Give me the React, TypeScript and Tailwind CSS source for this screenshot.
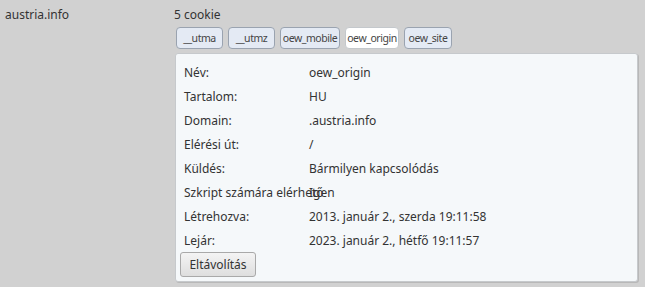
import React from 'react';

const cookies: { name: string; w: string }[] = [
  { name: '__utma', w: 'w-[47px]' },
  { name: '__utmz', w: 'w-[47px]' },
  { name: 'oew_mobile', w: 'w-[60px]' },
  { name: 'oew_origin', w: 'w-[54px]' },
  { name: 'oew_site', w: 'w-[48px]' },
];
const active = 'oew_origin';

const rows: [string, string][] = [
  ['Név:', 'oew_origin'],
  ['Tartalom:', 'HU'],
  ['Domain:', '.austria.info'],
  ['Elérési út:', '/'],
  ['Küldés:', 'Bármilyen kapcsolódás'],
  ['Szkript számára elérhető', 'Igen'],
  ['Létrehozva:', '2013. január 2., szerda 19:11:58'],
  ['Lejár:', '2023. január 2., hétfő 19:11:57'],
];

export default function App() {
  return (
    <div
      className="w-[645px] h-[287px] bg-[#d1d1d1] text-[#333] text-[12px] flex overflow-hidden"
      style={{ fontFamily: '"Segoe UI", "Noto Sans", "Open Sans", sans-serif' }}
    >
      {/* Site column */}
      <div className="w-[169px] pl-[5px] pt-[7px] leading-[16px]">austria.info</div>

      {/* Cookie details */}
      <div className="flex-1 flex flex-col pt-[7px] pr-[7px]">
        <div className="pl-[5px] leading-[16px]">5 cookie</div>
        <div className="flex gap-[5px] mt-[4px] pl-[7px]">
          {cookies.map((c) => (
            <button
              key={c.name}
              className={`${c.w} h-[22px] rounded-[4px] border text-[10.5px] tracking-[-0.45px] leading-none text-[#444] whitespace-nowrap ${
                c.name === active
                  ? 'bg-white border-[#c4c8cc]'
                  : 'bg-[#e4eaf4] border-[#9aa3b0]'
              }`}
            >
              {c.name}
            </button>
          ))}
        </div>
        <div className="mt-[4px] ml-[6px] h-[229px] bg-[#f5f8fa] border border-[#c6c9cc] rounded-[3px] shadow-[1px_1px_0_#b8b8b8] flex flex-col pt-[7px] pl-[8px]">
          {rows.map(([label, value]) => (
            <div key={label} className="flex h-[24px] items-center whitespace-nowrap">
              <span className="w-[125px] overflow-visible">{label}</span>
              <span>{value}</span>
            </div>
          ))}
          <button className="-mt-[1px] -ml-[4px] w-[76px] h-[25px] rounded-[3px] border border-[#a9a9a9] bg-gradient-to-b from-[#f4f4f4] to-[#dedede] text-[12px]">
            Eltávolítás
          </button>
        </div>
      </div>
    </div>
  );
}
